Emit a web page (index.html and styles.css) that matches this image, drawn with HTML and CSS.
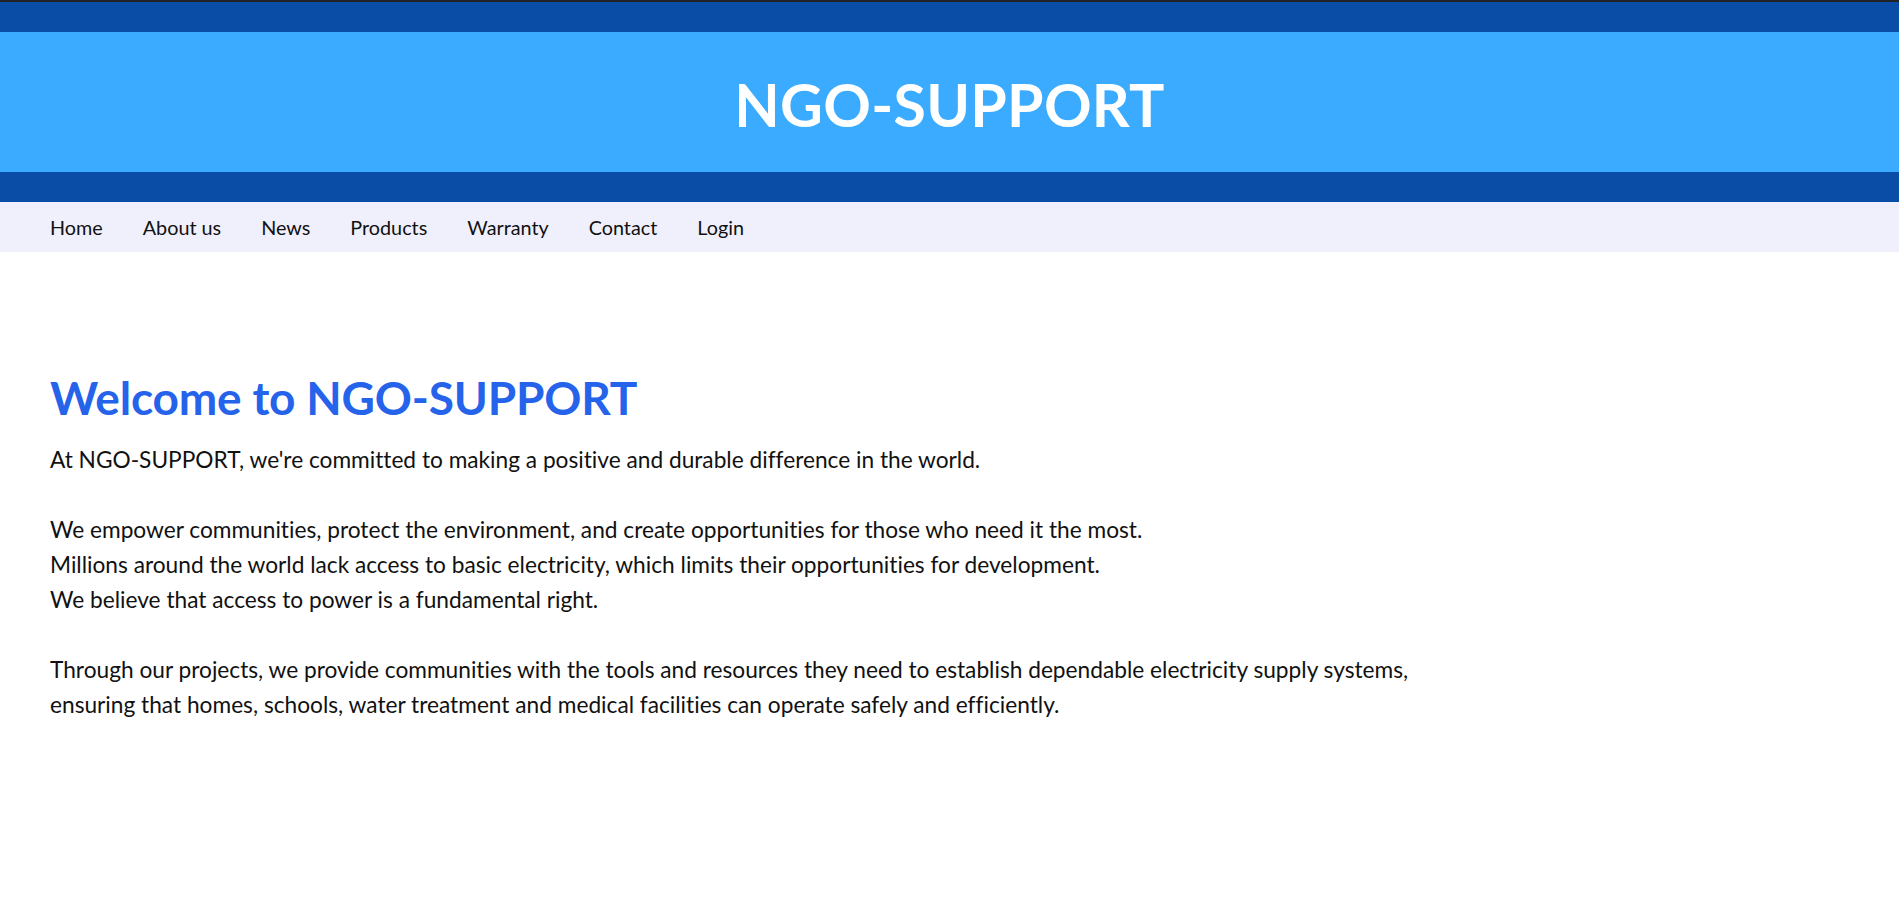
FILE: index.html
```html
<!DOCTYPE html>
<html lang="en">
<head>
<meta charset="utf-8">
<title>NGO-SUPPORT</title>
<link rel="stylesheet" href="styles.css">
</head>
<body>
<header class="site-header">
  <h1 class="site-title">NGO-SUPPORT</h1>
</header>
<nav class="main-nav">
  <ul class="nav-list">
    <li><a class="nav-link" href="#">Home</a></li>
    <li><a class="nav-link" href="#">About us</a></li>
    <li><a class="nav-link" href="#">News</a></li>
    <li><a class="nav-link" href="#">Products</a></li>
    <li><a class="nav-link" href="#">Warranty</a></li>
    <li><a class="nav-link" href="#">Contact</a></li>
    <li><a class="nav-link" href="#">Login</a></li>
  </ul>
</nav>
<main class="content">
  <h2 class="welcome">Welcome to NGO-SUPPORT</h2>
  <p class="intro">At NGO-SUPPORT, we're committed to making a positive and durable difference in the world.<br><br>We empower communities, protect the environment, and create opportunities for those who need it the most.<br>Millions around the world lack access to basic electricity, which limits their opportunities for development.<br>We believe that access to power is a fundamental right.<br><br>Through our projects, we provide communities with the tools and resources they need to establish dependable electricity supply systems,<br>ensuring that homes, schools, water treatment and medical facilities can operate safely and efficiently.</p>
</main>
</body>
</html>
```

FILE: styles.css
```css
html, body {
  margin: 0;
  padding: 0;
  background: #ffffff;
}

body {
  font-family: Lato, "Open Sans", "Liberation Sans", sans-serif;
  font-variant-ligatures: no-common-ligatures;
  color: #111111;
}

.site-header {
  border-top: 2px solid #1f2226;
  background: #3aabff;
  box-shadow: inset 0 30px 0 #094da6, inset 0 -30px 0 #094da6;
  height: 200px;
  display: flex;
  align-items: center;
  justify-content: center;
}

.site-title {
  margin: 4px 0 0;
  color: #ffffff;
  font-size: 59px;
  font-weight: 700;
  line-height: 1;
  letter-spacing: 0.3px;
}

.main-nav {
  background: #f0f0fd;
  height: 50px;
  display: flex;
  align-items: center;
  padding: 0 0 0 50px;
}

.nav-list {
  list-style: none;
  margin: 0;
  padding: 0;
  display: flex;
  gap: 40px;
}

.nav-link {
  color: #111111;
  text-decoration: none;
  font-size: 19.8px;
  line-height: 24px;
  display: block;
}

.content {
  padding: 117px 50px 40px;
}

.welcome {
  margin: 0 0 15px;
  font-size: 46px;
  line-height: 58px;
  font-weight: 700;
  letter-spacing: -0.2px;
  color: #2563eb;
}

.intro {
  margin: 0;
  font-size: 22.7px;
  line-height: 35px;
}
```
